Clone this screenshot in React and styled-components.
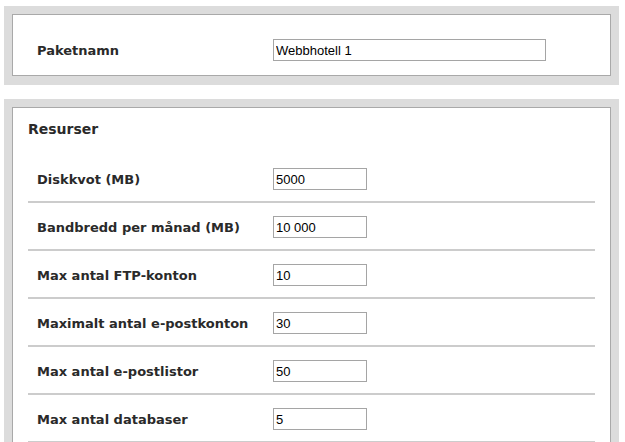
import React from "react";
import styled, { createGlobalStyle } from "styled-components";

const GlobalStyle = createGlobalStyle`
  html, body {
    margin: 0;
    padding: 0;
    background: #fff;
  }
  body {
    font-family: "DejaVu Sans", Verdana, sans-serif;
    color: #2a2a2a;
  }
`;

const PAGE = styled.div`
  padding: 6px 6px 0 4px;
  display: flex;
  flex-direction: column;
  gap: 14px;
`;

const FRAME = styled.div`
  background: #dcdcdc;
  padding: 8px 8px ${(p) => (p.$open ? "0" : "9px")} 8px;
`;

const PANEL = styled.div`
  background: #fff;
  border: 1px solid #a9a9a9;
  padding: ${(p) => (p.$heading ? "12px 15px 0" : "0 15px")};
`;

const HEADING = styled.h2`
  margin: 0;
  font-size: 14px;
  font-weight: bold;
  line-height: 18px;
  height: 35px;
  color: #2a2a2a;
`;

const ROW = styled.div`
  display: grid;
  grid-template-columns: 236px 1fr;
  align-items: center;
  padding: ${(p) => (p.$single ? "24px 0 14px 9px" : "13px 0 11px 9px")};
  border-bottom: ${(p) => (p.$single ? "none" : "2px solid #cccccc")};
`;

const LABEL = styled.label`
  font-size: 13px;
  font-weight: bold;
  color: #2a2a2a;
  white-space: nowrap;
`;

const INPUT = styled.input`
  box-sizing: border-box;
  width: ${(p) => p.$w}px;
  height: 22px;
  margin: 0;
  padding: 0 2px;
  border: 1px solid #a5a5a5;
  border-radius: 0;
  font-family: "Liberation Sans", Arial, sans-serif;
  font-size: 13px;
  color: #000;
  background: #fff;
  outline: none;
`;

const rows = [
  ["Diskkvot (MB)", "5000"],
  ["Bandbredd per månad (MB)", "10 000"],
  ["Max antal FTP-konton", "10"],
  ["Maximalt antal e-postkonton", "30"],
  ["Max antal e-postlistor", "50"],
  ["Max antal databaser", "5"],
];

const App = () => {
  return (
    <>
      <GlobalStyle />
      <PAGE>
        <FRAME>
          <PANEL>
            <ROW $single>
              <LABEL>Paketnamn</LABEL>
              <INPUT $w={273} defaultValue="Webbhotell 1" />
            </ROW>
          </PANEL>
        </FRAME>
        <FRAME $open>
          <PANEL $heading>
            <HEADING>Resurser</HEADING>
            {rows.map(([label, value]) => (
              <ROW key={label}>
                <LABEL>{label}</LABEL>
                <INPUT $w={94} defaultValue={value} />
              </ROW>
            ))}
          </PANEL>
        </FRAME>
      </PAGE>
    </>
  );
};

export default App;
